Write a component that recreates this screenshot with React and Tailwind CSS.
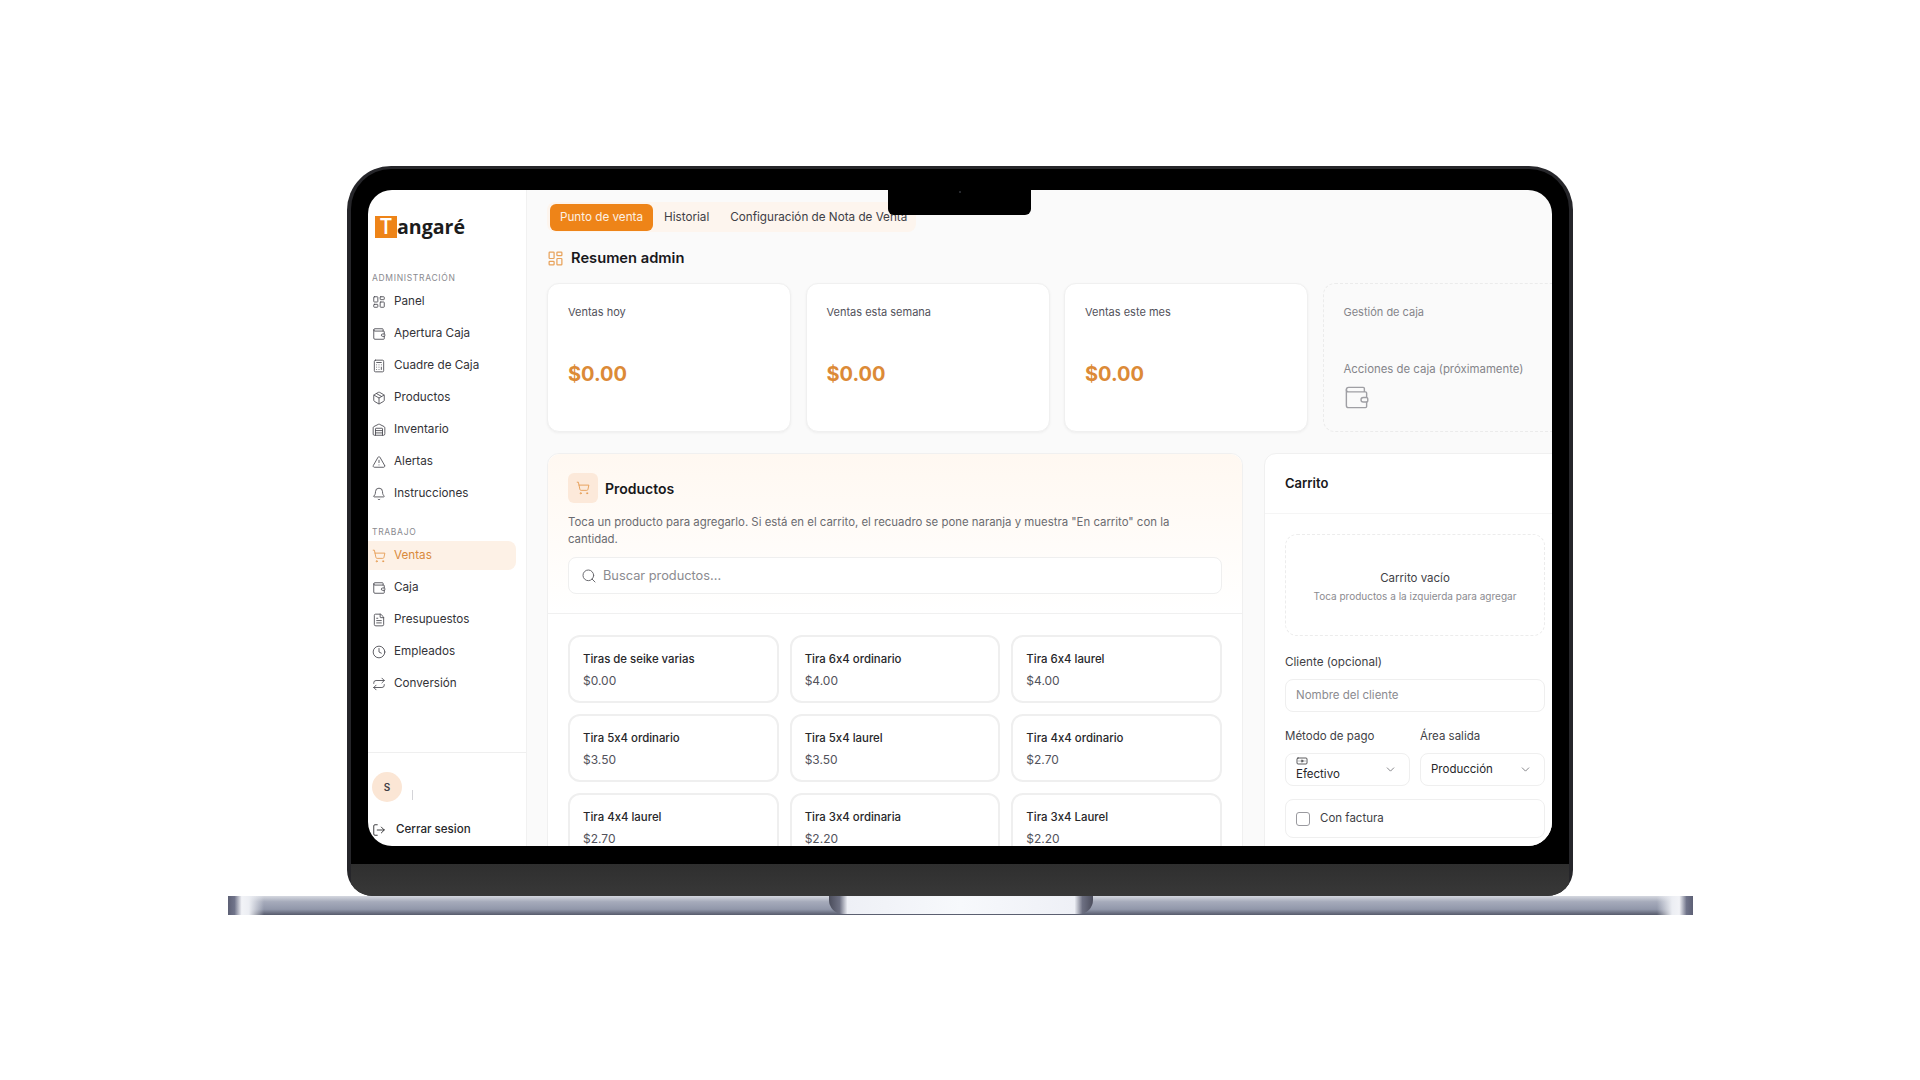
import React from "react";
import {
  LayoutDashboard,
  Wallet,
  Calculator,
  Package,
  Warehouse,
  TriangleAlert,
  Bell,
  ShoppingCart,
  FileText,
  Clock,
  Repeat,
  LogOut,
  Search,
  ChevronDown,
  Banknote,
} from "lucide-react";

const adminNav = [
  ["Panel", LayoutDashboard],
  ["Apertura Caja", Wallet],
  ["Cuadre de Caja", Calculator],
  ["Productos", Package],
  ["Inventario", Warehouse],
  ["Alertas", TriangleAlert],
  ["Instrucciones", Bell],
];

const workNav = [
  ["Ventas", ShoppingCart, true],
  ["Caja", Wallet],
  ["Presupuestos", FileText],
  ["Empleados", Clock],
  ["Conversión", Repeat],
];

const products = [
  ["Tiras de seike varias", "$0.00"],
  ["Tira 6x4 ordinario", "$4.00"],
  ["Tira 6x4 laurel", "$4.00"],
  ["Tira 5x4 ordinario", "$3.50"],
  ["Tira 5x4 laurel", "$3.50"],
  ["Tira 4x4 ordinario", "$2.70"],
  ["Tira 4x4 laurel", "$2.70"],
  ["Tira 3x4 ordinaria", "$2.20"],
  ["Tira 3x4 Laurel", "$2.20"],
];

const NavItem = ({ label, icon: Icon, active }) => (
  <div
    className={`flex h-[29px] items-center gap-[8px] rounded-r-lg pl-[4px] text-[11.7px] ${
      active ? "bg-[#fdf1e6] text-[#d98a3d]" : "text-[#333338]"
    }`}
  >
    <Icon size={14} strokeWidth={1.5} className={active ? "text-[#e59a50]" : "text-[#4b4b52]"} />
    {label}
  </div>
);

const Sidebar = () => (
  <aside className="flex w-[159px] shrink-0 flex-col border-r border-[#f1f1f1] bg-white">
    <div className="flex items-center pl-[7px] pt-[26px]">
      <span className="flex h-[22px] w-[22px] items-center justify-center bg-[#ee8418] font-['Open_Sans'] text-[21px] font-semibold text-white">
        T
      </span>
      <span className="font-['Open_Sans'] text-[19.6px] leading-[22px] font-bold text-[#1c1c1c]">angaré</span>
    </div>
    <p className="mt-[34px] pl-[4px] text-[8.5px] leading-[12px] tracking-[0.08em] text-[#8a8a8f]">ADMINISTRACIÓN</p>
    <nav className="mt-[3px] flex flex-col gap-[3px] pr-[10px]">
      {adminNav.map(([label, icon]) => (
        <NavItem key={label} label={label} icon={icon} />
      ))}
    </nav>
    <p className="mt-[18px] pl-[4px] text-[8.5px] leading-[12px] tracking-[0.08em] text-[#8a8a8f]">TRABAJO</p>
    <nav className="mt-[3px] flex flex-col gap-[3px] pr-[10px]">
      {workNav.map(([label, icon, active]) => (
        <NavItem key={label} label={label} icon={icon} active={active} />
      ))}
    </nav>
    <div className="mt-auto border-t border-[#efefef] pb-[8px] pl-[4px] pt-[19px]">
      <div className="flex items-start">
        <span className="flex h-[30px] w-[30px] items-center justify-center rounded-full bg-[#fbe6d5] text-[10px] font-semibold text-[#3f3f46]">
          S
        </span>
        <span className="ml-[10px] mt-[18px] h-[10px] w-px bg-[#d4d4d8]" />
      </div>
      <div className="mt-[20px] flex h-[16px] items-center gap-[10px] text-[11.6px] font-medium text-[#27272a]">
        <LogOut size={14} strokeWidth={1.5} />
        Cerrar sesion
      </div>
    </div>
  </aside>
);

const StatCard = ({ label, value }) => (
  <div className="flex h-[149px] w-[244px] shrink-0 flex-col rounded-xl border border-[#f0f0f0] bg-white px-[20px] pt-[19px] shadow-[0_1px_3px_rgba(0,0,0,0.05)]">
    <p className="text-[11px] leading-[18px] text-[#52525b]">{label}</p>
    <p className="mt-[38px] text-[20px] leading-[30px] font-bold text-[#dc8a37]">{value}</p>
  </div>
);

const ProductCard = ({ name, price }) => (
  <div className="flex h-[68px] flex-col rounded-xl border-2 border-[#efefef] bg-white px-[13px] pt-[13px]">
    <p className="text-[11.4px] leading-[18px] font-medium text-[#27272a]">{name}</p>
    <p className="mt-[4px] text-[12px] leading-[18px] text-[#52525b]">{price}</p>
  </div>
);

const ProductsPanel = () => (
  <section className="h-[420px] w-[696px] shrink-0 rounded-t-xl border border-[#f0f0f0] bg-white">
    <div className="h-[160px] rounded-t-xl border-b border-[#f0f0f0] bg-gradient-to-b from-[#fff8f1] to-white px-[20px] pt-[19px]">
      <div className="flex items-center gap-[7px]">
        <span className="flex h-[30px] w-[30px] items-center justify-center rounded-md bg-[#fce9da]">
          <ShoppingCart size={14} strokeWidth={1.5} className="text-[#e59a50]" />
        </span>
        <h2 className="text-[14px] font-semibold text-[#18181b]">Productos</h2>
      </div>
      <p className="mt-[11px] text-[11.4px] leading-[17px] text-[#6b6b70]">
        Toca un producto para agregarlo. Si está en el carrito, el recuadro se pone naranja y muestra "En carrito" con
        la cantidad.
      </p>
      <div className="mt-[9px] flex h-[37px] items-center gap-[6px] rounded-lg border border-[#efefef] bg-white pl-[12px] text-[12.8px] text-[#8b8b90]">
        <Search size={16} strokeWidth={1.5} className="text-[#6b6b70]" />
        Buscar productos...
      </div>
    </div>
    <div className="grid grid-cols-3 gap-x-[11px] gap-y-[11px] px-[20px] pt-[21px]">
      {products.map(([name, price]) => (
        <ProductCard key={name} name={name} price={price} />
      ))}
    </div>
  </section>
);

const CartPanel = () => (
  <section className="h-[420px] w-[300px] shrink-0 rounded-tl-xl border border-[#f0f0f0] bg-white">
    <div className="h-[60px] border-b border-[#f5f5f5] px-[20px] pt-[20px]">
      <h2 className="text-[13px] leading-[18px] font-semibold text-[#18181b]">Carrito</h2>
    </div>
    <div className="ml-[20px] mt-[20px] w-[260px]">
      <div className="flex h-[102px] flex-col items-center justify-center rounded-xl border border-dashed border-[#ececec] pt-[2px]">
        <p className="text-[11.5px] leading-[18px] text-[#3f3f46]">Carrito vacío</p>
        <p className="mt-[2px] text-[10px] leading-[14px] text-[#8b8b90]">Toca productos a la izquierda para agregar</p>
      </div>
      <p className="mt-[17px] text-[11.7px] leading-[18px] text-[#3f3f46]">Cliente (opcional)</p>
      <div className="mt-[8px] flex h-[33px] items-center rounded-lg border border-[#efefef] pl-[10px] text-[11.5px] text-[#8b8b90]">
        Nombre del cliente
      </div>
      <div className="mt-[15px] grid grid-cols-2 gap-x-[10px]">
        <div>
          <p className="text-[11.5px] leading-[18px] text-[#3f3f46]">Método de pago</p>
          <div className="mt-[8px] flex h-[33px] items-center justify-between rounded-lg border border-[#efefef] pl-[10px] pr-[12px] text-[#27272a]">
            <span className="mb-[4px] flex flex-col text-[11.5px] leading-[14px]">
              <Banknote size={12} strokeWidth={1.5} />
              Efectivo
            </span>
            <ChevronDown size={13} strokeWidth={1.5} className="text-[#6b6b70]" />
          </div>
        </div>
        <div>
          <p className="text-[11.5px] leading-[18px] text-[#3f3f46]">Área salida</p>
          <div className="mt-[8px] flex h-[33px] items-center justify-between rounded-lg border border-[#efefef] pl-[10px] pr-[12px] text-[11.5px] text-[#27272a]">
            Producción
            <ChevronDown size={13} strokeWidth={1.5} className="text-[#6b6b70]" />
          </div>
        </div>
      </div>
      <div className="mt-[13px] flex h-[39px] items-center gap-[10px] rounded-lg border border-[#efefef] pl-[10px] text-[11.5px] text-[#3f3f46]">
        <span className="h-[14px] w-[14px] rounded-[3px] border border-[#9a9a9f]" />
        Con factura
      </div>
    </div>
  </section>
);

const Main = () => (
  <main className="min-w-0 flex-1 overflow-hidden bg-[#fafafa] pl-[20px]">
    <div className="mt-[12px] flex h-[30px] w-[369px] items-center rounded-lg bg-[#fdf5ee] pl-[3px] text-[11.7px] text-[#3f3f46]">
      <span className="flex h-[27px] w-[103px] items-center justify-center rounded-md bg-[#ee8418] pt-[1px] text-[#fdf0e2]">
        Punto de venta
      </span>
      <span className="ml-[11px] pt-[1px]">Historial</span>
      <span className="ml-[21px] pt-[1px]">Configuración de Nota de Venta</span>
    </div>
    <div className="mt-[15px] flex h-[22px] items-center gap-[7px]">
      <LayoutDashboard size={17} strokeWidth={1.75} className="text-[#e8a25a]" />
      <h1 className="text-[14.7px] font-semibold text-[#18181b]">Resumen admin</h1>
    </div>
    <div className="mt-[14px] flex gap-[14.5px]">
      <StatCard label="Ventas hoy" value="$0.00" />
      <StatCard label="Ventas esta semana" value="$0.00" />
      <StatCard label="Ventas este mes" value="$0.00" />
      <div className="flex h-[149px] w-[244px] shrink-0 flex-col rounded-xl border border-dashed border-[#ebebeb] bg-[#fafafa] px-[20px] pt-[19px]">
        <p className="text-[11px] leading-[18px] text-[#85858a]">Gestión de caja</p>
        <p className="mt-[39px] whitespace-nowrap text-[11.4px] leading-[18px] text-[#85858a]">Acciones de caja (próximamente)</p>
        <Wallet size={27} strokeWidth={1.25} className="-ml-[1px] mt-[6px] text-[#9f9fa4]" />
      </div>
    </div>
    <div className="mt-[21px] flex gap-[21px]">
      <ProductsPanel />
      <CartPanel />
    </div>
  </main>
);

export default function App() {
  return (
    <div className="flex h-[1080px] flex-col items-center overflow-hidden bg-white pt-[166px] font-['Inter',sans-serif] [font-feature-settings:'calt'_0]">
      <div className="relative w-[1226px] overflow-hidden rounded-t-[44px] rounded-b-[26px] bg-[#26262a] px-[4px] pt-[3px]">
        <div className="rounded-t-[40px] bg-black px-[17px] pb-[18px] pt-[21px]">
          <div className="flex h-[656px] overflow-hidden rounded-[24px]">
            <Sidebar />
            <Main />
          </div>
        </div>
        <div className="h-[32px] bg-gradient-to-b from-[#2f2f2f] to-[#383838]" />
        {/* camera notch */}
        <div className="absolute left-[541px] top-[24px] flex h-[25px] w-[143px] items-start justify-center rounded-b-md bg-black pt-[1px]">
          <span className="h-[2px] w-[2px] rounded-full bg-[#33363d]" />
        </div>
      </div>
      <div className="relative h-[19px] w-[1465px] bg-[linear-gradient(to_bottom,#d5d8e0_0%,#a6abbb_30%,#9197aa_70%,#565a6b_100%)]">
        <div className="absolute inset-y-0 left-0 w-[36px] bg-[linear-gradient(to_right,#5d6075,#70748a_18%,#f2f3f7_38%,#eceef3_58%,rgba(160,163,185,0))]" />
        <div className="absolute inset-y-0 right-0 w-[36px] bg-[linear-gradient(to_left,#5d6075,#70748a_18%,#f2f3f7_38%,#eceef3_58%,rgba(160,163,185,0))]" />
        {/* trackpad lip */}
        <div className="absolute left-[601px] top-0 h-[18px] w-[264px] rounded-b-[14px] bg-[linear-gradient(to_right,#4b4d5c,#6d7082_4%,#eef0f6_7%,#f7f9fc_50%,#eef0f6_93%,#6d7082_96%,#4b4d5c)]" />
      </div>
    </div>
  );
}
